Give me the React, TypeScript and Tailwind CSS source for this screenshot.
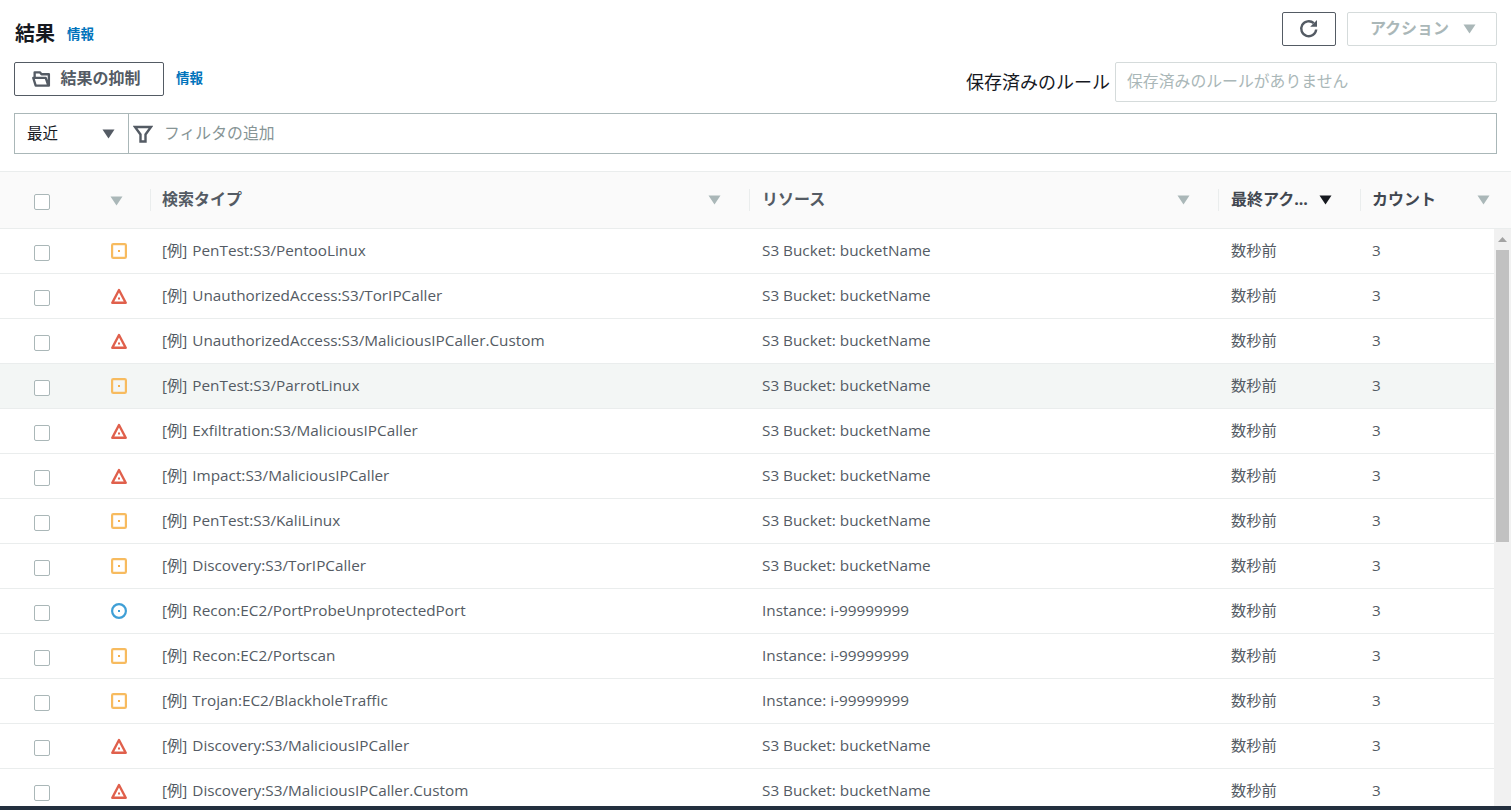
import React from "react";

type Severity = "medium" | "high" | "low";

const rows: { sev: Severity; type: string; resource: string; hover?: boolean }[] = [
  { sev: "medium", type: "PenTest:S3/PentooLinux", resource: "S3 Bucket: bucketName" },
  { sev: "high", type: "UnauthorizedAccess:S3/TorIPCaller", resource: "S3 Bucket: bucketName" },
  { sev: "high", type: "UnauthorizedAccess:S3/MaliciousIPCaller.Custom", resource: "S3 Bucket: bucketName" },
  { sev: "medium", type: "PenTest:S3/ParrotLinux", resource: "S3 Bucket: bucketName", hover: true },
  { sev: "high", type: "Exfiltration:S3/MaliciousIPCaller", resource: "S3 Bucket: bucketName" },
  { sev: "high", type: "Impact:S3/MaliciousIPCaller", resource: "S3 Bucket: bucketName" },
  { sev: "medium", type: "PenTest:S3/KaliLinux", resource: "S3 Bucket: bucketName" },
  { sev: "medium", type: "Discovery:S3/TorIPCaller", resource: "S3 Bucket: bucketName" },
  { sev: "low", type: "Recon:EC2/PortProbeUnprotectedPort", resource: "Instance: i-99999999" },
  { sev: "medium", type: "Recon:EC2/Portscan", resource: "Instance: i-99999999" },
  { sev: "medium", type: "Trojan:EC2/BlackholeTraffic", resource: "Instance: i-99999999" },
  { sev: "high", type: "Discovery:S3/MaliciousIPCaller", resource: "S3 Bucket: bucketName" },
  { sev: "high", type: "Discovery:S3/MaliciousIPCaller.Custom", resource: "S3 Bucket: bucketName" },
];

function SevIcon({ sev }: { sev: Severity }) {
  if (sev === "medium") {
    return (
      <svg width="16" height="16" viewBox="0 0 16 16" fill="none">
        <rect x="1.1" y="1.1" width="13.8" height="13.8" rx="1.2" stroke="#f7bb5f" strokeWidth="2.2" />
        <rect x="7" y="7" width="2" height="2" fill="#f7b04a" />
      </svg>
    );
  }
  if (sev === "high") {
    return (
      <svg width="16" height="16" viewBox="0 0 16 16" fill="none">
        <path d="M8 2 L14.7 14.8 H1.3 Z" stroke="#e0604c" strokeWidth="2.4" strokeLinejoin="round" />
        <rect x="7" y="9.5" width="2" height="2" fill="#e0604c" />
      </svg>
    );
  }
  return (
    <svg width="16" height="16" viewBox="0 0 16 16" fill="none">
      <circle cx="8" cy="8" r="6.9" stroke="#3f9fd6" strokeWidth="2.2" />
      <rect x="7" y="7" width="2" height="2" fill="#3f9fd6" />
    </svg>
  );
}

function Caret({ color = "#aab7b8" }: { color?: string }) {
  return (
    <svg width="13" height="10" viewBox="0 0 13 10" className="shrink-0">
      <path d="M0.5 0.5 H12.5 L6.5 9.5 Z" fill={color} />
    </svg>
  );
}

function Checkbox() {
  return <div className="w-[16px] h-[16px] rounded-[2px] border border-[#aab7b8] bg-white" />;
}

const gridCols = "grid grid-cols-[150px_599px_469px_142px_1fr]";

export default function App() {
  return (
    <div
      className="w-[1511px] h-[810px] overflow-hidden bg-white flex flex-col text-[#16191f]"
      style={{ fontFamily: '"Open Sans", "Noto Sans CJK JP", sans-serif' }}
    >
      {/* top area */}
      <div className="h-[171px] shrink-0 pl-[14px] pr-[14px] pt-[12px]">
        <div className="flex items-start justify-between h-[50px]">
          <div className="flex items-center gap-[12px] pt-[10px] pl-[1px]">
            <h1 className="text-[20px] font-bold leading-[24px]">結果</h1>
            <span className="text-[13.5px] leading-[24px] font-semibold text-[#0073bb]">情報</span>
          </div>
          <div className="flex gap-[11px]">
            <button className="w-[54px] h-[34px] flex items-center justify-center rounded-[2px] border border-[#545b64] bg-white">
              <svg width="20" height="20" viewBox="0 0 20 20" fill="none">
                <path d="M17.2 10.5 A7.5 7.5 0 1 1 14.8 4.2" stroke="#545b64" strokeWidth="2.4" />
                <path d="M18 1 V7.8 H11.2 Z" fill="#545b64" />
              </svg>
            </button>
            <button className="w-[150px] h-[34px] flex items-center justify-center gap-[14px] pb-[2px] pl-[2px] rounded-[2px] border border-[#d5dbdb] bg-white text-[16px] font-bold text-[#aab7b8]">
              アクション
              <span className="pt-[2px] flex"><Caret /></span>
            </button>
          </div>
        </div>
        <div className="flex items-start justify-between h-[51px]">
          <div className="flex items-center h-[34px]">
            <button className="w-[150px] h-[34px] flex items-center justify-center gap-[9px] pr-[5px] rounded-[2px] border border-[#545b64] bg-white text-[16px] font-bold text-[#545b64]">
              <svg width="19" height="18" viewBox="0 0 18 17" fill="none">
                <path d="M2.5 8 V2.2 H7.5 L9 4 H16 V14.8 H3.5 L1.2 7.5 H13 L15.5 14.8" stroke="#545b64" strokeWidth="2.2" strokeLinejoin="round" />
              </svg>
              <span className="pb-[2px]">結果の抑制</span>
            </button>
            <span className="ml-[12px] pb-[2px] text-[13.5px] font-semibold text-[#0073bb]">情報</span>
          </div>
          <div className="flex items-center gap-[5px]">
            <span className="text-[18px] leading-[40px]">保存済みのルール</span>
            <div className="w-[382px] h-[40px] flex items-center px-[11px] rounded-[2px] border border-[#d5dbdb] text-[15.85px] text-[#aab7b8]">
              保存済みのルールがありません
            </div>
          </div>
        </div>
        <div className="flex h-[41px] border border-[#aab7b8]">
          <div className="w-[114px] flex items-center justify-between pl-[12px] pr-[13px] border-r border-[#aab7b8] text-[15.5px]">
            <span>最近</span>
            <Caret color="#545b64" />
          </div>
          <div className="flex-1 flex items-center text-[15.85px] text-[#879596]">
            <svg width="20" height="20" viewBox="0 0 20 20" fill="none" className="ml-[4px] mr-[11px] mt-[1px]">
              <path d="M2 3 H18 L12.5 10.5 V17.5 H7.5 V10.5 Z" stroke="#545b64" strokeWidth="2.4" strokeLinejoin="miter" />
            </svg>
            <span>フィルタの追加</span>
          </div>
        </div>
      </div>

      {/* table header */}
      <div className={`${gridCols} h-[58px] shrink-0 border-y border-[#eaeded] bg-[#fafafa] text-[16px] font-bold text-[#545b64]`}>
        <div className="flex items-center h-full">
          <div className="ml-[34px] mt-[3px]"><Checkbox /></div>
          <div className="ml-[60px] mt-[1px]"><Caret /></div>
          <div className="ml-[27px] h-[22px] border-l border-[#eaeded]" />
        </div>
        <div className="flex items-center justify-between pl-[12px] pr-[28px] h-full">
          <span className="pb-[2px]">検索タイプ</span>
          <Caret />
        </div>
        <div className="flex items-center h-full">
          <div className="h-[22px] border-l border-[#eaeded]" />
          <span className="ml-[12px] flex-1 pb-[2px]">リソース</span>
          <span className="mr-[28px]"><Caret /></span>
        </div>
        <div className="flex items-center h-full">
          <div className="h-[22px] border-l border-[#eaeded]" />
          <span className="ml-[12px] flex-1 pb-[2px] whitespace-nowrap text-[#414750]">最終アク...</span>
          <span className="mr-[28px]"><Caret color="#16191f" /></span>
        </div>
        <div className="flex items-center h-full">
          <div className="h-[22px] border-l border-[#eaeded]" />
          <span className="ml-[11px] flex-1 pb-[2px] text-[#414750]">カウント</span>
          <span className="mr-[21px]"><Caret /></span>
        </div>
      </div>

      {/* table body + scrollbar */}
      <div className="flex-1 min-h-0 flex overflow-hidden">
        <div className="flex-1 min-w-0 overflow-hidden">
          {rows.map((r) => (
            <div
              key={r.type}
              className={`${gridCols} h-[45px] border-b border-[#eaeded] text-[15.3px] text-[#545b64] items-center ${r.hover ? "bg-[#f3f6f5]" : "bg-white"}`}
            >
              <div className="flex items-center">
                <div className="ml-[34px] mt-[3px]"><Checkbox /></div>
                <div className="ml-[61px] flex"><SevIcon sev={r.sev} /></div>
              </div>
              <div className="pl-[12px] pb-[1px] whitespace-nowrap">
                <span className="mr-[1px]">[例]</span> {r.type}
              </div>
              <div className="pl-[13px] pb-[1px] whitespace-nowrap">{r.resource}</div>
              <div className="pl-[13px] pb-[1px]">数秒前</div>
              <div className="pl-[12px] pb-[1px]">3</div>
            </div>
          ))}
        </div>
        <div className="w-[17px] shrink-0 bg-[#f1f1f1] flex flex-col">
          <div className="h-[21px] flex items-center justify-center">
            <svg width="9" height="5" viewBox="0 0 9 5"><path d="M4.5 0 L9 5 H0 Z" fill="#a3a3a3" /></svg>
          </div>
          <div className="h-[292px] mx-[2px] bg-[#c1c1c1]" />
        </div>
      </div>
      <div className="h-[4px] shrink-0 bg-[#232f3e]" />
    </div>
  );
}
